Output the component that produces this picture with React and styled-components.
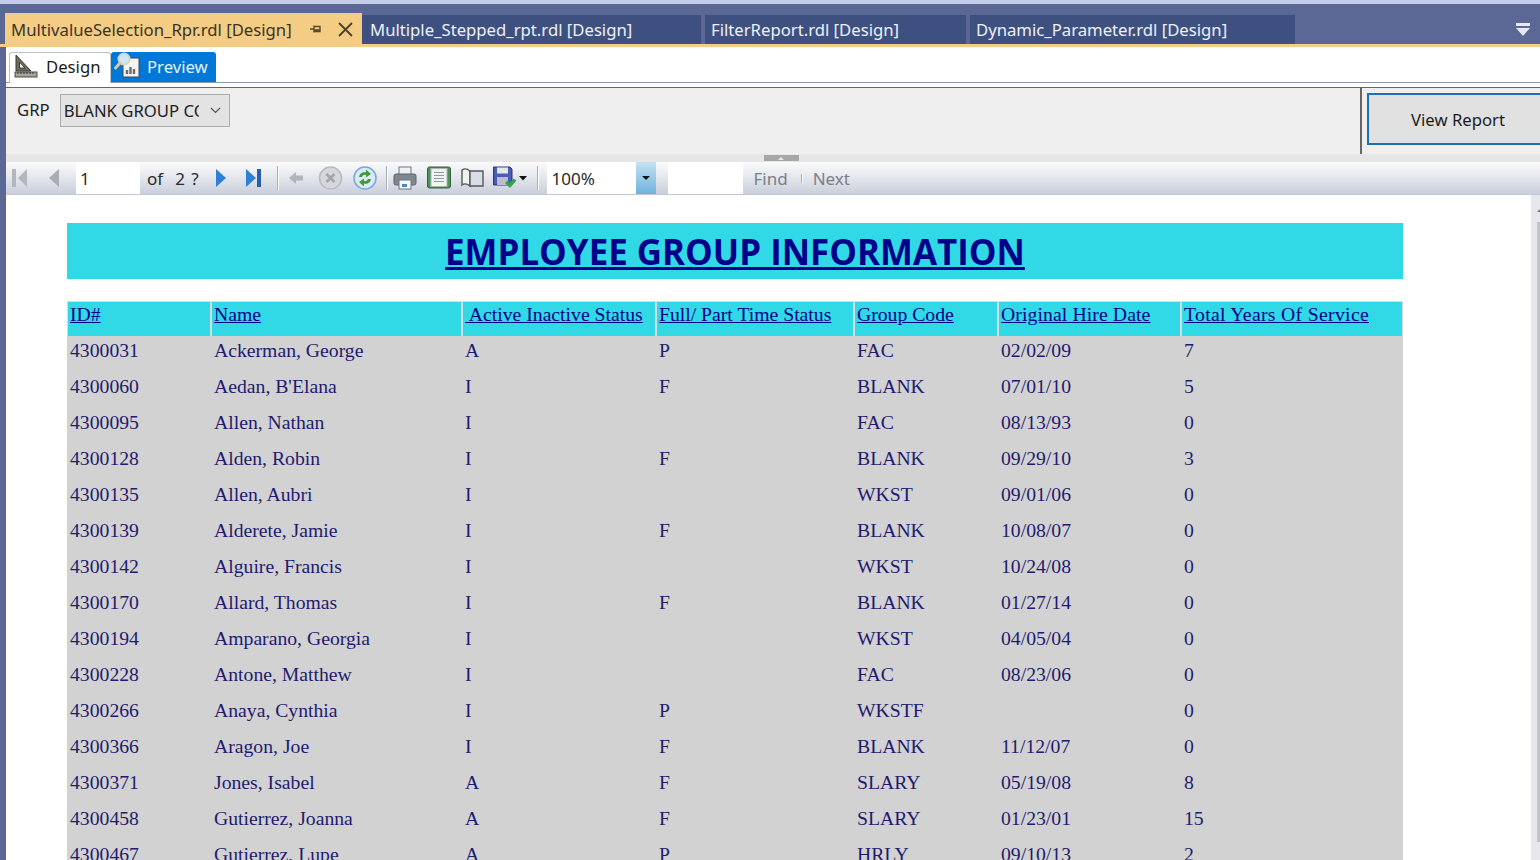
import React from "react";
import styled, { createGlobalStyle } from "styled-components";

const ui_font = `"Noto Sans", "Open Sans", sans-serif`;
const col_frame = "#5b6895";
const col_orange = "#f5cc84";
const col_cyan = "#31d9e6";
const col_row = "#d2d2d2";

const GlobalStyle = createGlobalStyle`
  html, body {
    margin: 0;
    height: 860px;
    overflow: hidden;
    background: #fff;
  }
`;

const Window = styled.div`
  width: 1540px;
  height: 860px;
  box-sizing: border-box;
  border-top: 4px solid #c5cdeb;
  background: ${col_frame};
  display: flex;
  flex-direction: column;
  overflow: hidden;
  font-family: ${ui_font};
`;

//#region Document tabs
const TabStrip = styled.div`
  height: 43px;
  flex: none;
  box-sizing: border-box;
  border-bottom: 3px solid ${col_orange};
  display: flex;
  align-items: flex-end;
  padding-left: 5px;
`;

const ActiveTab = styled.div`
  width: 357px;
  height: 34px;
  margin-bottom: -3px;
  box-sizing: border-box;
  padding: 0 0 2px 6px;
  background: ${col_orange};
  color: #3a3426;
  font-size: 16.7px;
  display: flex;
  align-items: center;
  white-space: nowrap;
`;

const TabName = styled.span`
  width: 299px;
  flex: none;
`;

const PinIcon = styled.svg`
  width: 12px;
  height: 12px;
  margin-right: 16px;
  flex: none;
`;

const CloseIcon = styled.svg`
  width: 15px;
  height: 15px;
  flex: none;
`;

const Tab = styled.div`
  width: ${(p) => p.$w}px;
  height: 29px;
  margin-right: ${(p) => p.$gap}px;
  box-sizing: border-box;
  padding-left: ${(p) => p.$pad}px;
  background: #3d5080;
  color: #eef0f6;
  font-size: 16.7px;
  line-height: 29px;
  white-space: nowrap;
  flex: none;
`;

const OverflowIcon = styled.svg`
  width: 14px;
  height: 13px;
  margin-left: 221px;
  margin-bottom: 8px;
  flex: none;
`;
//#endregion

const Content = styled.div`
  flex: 1;
  min-height: 0;
  margin-left: 6px;
  background: #fff;
  display: flex;
  flex-direction: column;
`;

//#region Design / Preview
const ViewTabs = styled.div`
  height: 36px;
  flex: none;
  box-sizing: border-box;
  padding: 5px 0 0 3px;
  border-bottom: 1px solid #8b9bb2;
  display: flex;
  align-items: stretch;
`;

const DesignTab = styled.div`
  width: 102px;
  box-sizing: border-box;
  margin-bottom: -1px;
  padding: 0 0 4px 4px;
  border: 1px solid #b9c1cc;
  border-bottom: 0;
  border-radius: 3px 3px 0 0;
  background: #fff;
  color: #1b1b1b;
  font-size: 16.7px;
  display: flex;
  align-items: center;
  gap: 8px;
`;

const PreviewTab = styled.div`
  width: 105px;
  box-sizing: border-box;
  padding: 0 0 2px 3px;
  border-radius: 3px 3px 0 0;
  background: #0078d7;
  color: #e6f2fb;
  font-size: 16.7px;
  display: flex;
  align-items: center;
  gap: 7px;
`;
//#endregion

//#region Parameters
const ParamBar = styled.div`
  height: 67px;
  flex: none;
  margin-top: 4px;
  box-sizing: border-box;
  border-top: 1px solid #666;
  background: #efefef;
  display: flex;
  justify-content: space-between;
  overflow: hidden;
`;

const ParamFields = styled.div`
  padding: 6px 0 0 11px;
  display: flex;
  align-items: flex-start;
  gap: 10px;
`;

const ParamLabel = styled.span`
  font-size: 16.7px;
  line-height: 33px;
  color: #222;
  margin-top: -1px;
`;

const ParamSelect = styled.div`
  width: 170px;
  height: 33px;
  box-sizing: border-box;
  border: 1px solid #adadad;
  background: #e3e3e3;
  padding-left: 3px;
  font-size: 16.7px;
  line-height: 31px;
  color: #222;
  display: flex;
  align-items: center;
  justify-content: space-between;
  white-space: nowrap;
`;

const SelectText = styled.span`
  width: 135px;
  overflow: hidden;
`;

const SelectCaret = styled.svg`
  width: 11px;
  height: 7px;
  margin-right: 8px;
  flex: none;
`;

const ParamAction = styled.div`
  width: 180px;
  flex: none;
  box-sizing: border-box;
  border-left: 2px solid #666;
  padding: 5px 0 0 5px;
`;

const ViewReport = styled.button`
  width: 182px;
  height: 52px;
  box-sizing: border-box;
  border: 2px solid #1e6fb4;
  background: #e1e1e1;
  color: #1c1c1c;
  font-family: ${ui_font};
  font-size: 16.7px;
  padding: 0;
  margin: 0;
`;

const Splitter = styled.div`
  height: 8px;
  flex: none;
  background: #e6e6e6;
  display: flex;
  justify-content: center;
`;

const SplitterGrip = styled.div`
  width: 35px;
  height: 6px;
  margin: 1px 0 0 16px;
  background: #a7a7a7;
  display: flex;
  justify-content: center;
  align-items: center;

  &::before {
    content: "";
    border-left: 3px solid transparent;
    border-right: 3px solid transparent;
    border-bottom: 3px solid #e8e8e8;
  }
`;
//#endregion

//#region Report toolbar
const Toolbar = styled.div`
  height: 33px;
  flex: none;
  box-sizing: border-box;
  border-bottom: 1px solid #c2c7d3;
  background: linear-gradient(180deg, #fbfbfc 0%, #e6e8ee 45%, #c9cedb 100%);
  display: flex;
  align-items: center;
  font-size: 17px;
  color: #2a2a2a;
`;

const ToolIcon = styled.svg`
  width: ${(p) => p.$w}px;
  height: 26px;
  margin-left: ${(p) => p.$ml}px;
  flex: none;
`;

const ToolInput = styled.div`
  width: ${(p) => p.$w}px;
  height: 32px;
  margin-left: ${(p) => p.$ml}px;
  box-sizing: border-box;
  padding-left: ${(p) => p.$pad || 0}px;
  background: #fff;
  line-height: 34px;
  flex: none;
`;

const ToolText = styled.span`
  margin-left: ${(p) => p.$ml}px;
  color: ${(p) => (p.$muted ? "#7b7f88" : "#2a2a2a")};
  word-spacing: ${(p) => p.$spread || 0}px;
  white-space: pre;
  flex: none;
`;

const ToolSep = styled.span`
  width: 1px;
  height: ${(p) => p.$h || 24}px;
  margin-left: ${(p) => p.$ml}px;
  background: #a9aeb9;
  box-shadow: 1px 0 0 #fff;
  flex: none;
`;

const ZoomButton = styled.div`
  width: 20px;
  height: 32px;
  background: linear-gradient(180deg, #c4e2f3 0%, #6fb2dc 100%);
  display: flex;
  align-items: center;
  justify-content: center;
  flex: none;

  &::before {
    content: "";
    border-left: 4px solid transparent;
    border-right: 4px solid transparent;
    border-top: 4px solid #111;
  }
`;
//#endregion

//#region Report
const ReportArea = styled.div`
  flex: 1;
  min-height: 0;
  display: flex;
  overflow: hidden;
`;

const ReportPage = styled.div`
  width: 1336px;
  flex: none;
  margin: 28px 0 0 61px;
`;

const Title = styled.div`
  height: 56px;
  background: ${col_cyan};
  color: #00008b;
  font-family: "Open Sans", sans-serif;
  font-weight: 700;
  font-size: 34.9px;
  line-height: 58px;
  text-align: center;
  text-decoration: underline;
`;

const Table = styled.table`
  width: 1336px;
  margin-top: 22px;
  table-layout: fixed;
  border-collapse: separate;
  border-spacing: 0;
  font-family: "Liberation Serif", serif;
`;

const HeadCell = styled.th`
  height: 35px;
  box-sizing: border-box;
  padding: 1px 0 0 2px;
  background: ${col_cyan};
  border: 1px solid #d6dcdc;
  border-bottom: 0;
  color: #00008b;
  font-size: 19.7px;
  letter-spacing: ${(p) => p.$track || 0}px;
  font-weight: 400;
  text-align: left;
  vertical-align: top;
  text-decoration: underline;
  white-space: pre;
`;

const Cell = styled.td`
  height: 36px;
  box-sizing: border-box;
  padding: 3px 0 0 3px;
  background: ${col_row};
  color: #1f1b6e;
  font-size: 19.7px;
  vertical-align: top;
  white-space: nowrap;
`;

const Scrollbar = styled.div`
  width: 9px;
  margin-left: auto;
  flex: none;
  background: #e8e8ec;
  display: flex;
  flex-direction: column;
  align-items: flex-end;

  &::before {
    content: "";
    margin-top: 14px;
    border-left: 3px solid transparent;
    border-bottom: 3px solid #777;
  }
`;

const ScrollThumb = styled.div`
  width: 3px;
  height: 620px;
  margin-top: 10px;
  background: #c2c3c9;
`;
//#endregion

const columns = [144, 251, 194, 198, 144, 183, 222];

const headers = [
  { label: "ID#" },
  { label: "Name" },
  { label: " Active Inactive Status" },
  { label: "Full/ Part Time Status" },
  { label: "Group Code" },
  { label: "Original Hire Date", track: 0.1 },
  { label: "Total Years Of Service", track: 0.32 },
];

const rows = [
  ["4300031", "Ackerman, George", "A", "P", "FAC", "02/02/09", "7"],
  ["4300060", "Aedan, B'Elana", "I", "F", "BLANK", "07/01/10", "5"],
  ["4300095", "Allen, Nathan", "I", "", "FAC", "08/13/93", "0"],
  ["4300128", "Alden, Robin", "I", "F", "BLANK", "09/29/10", "3"],
  ["4300135", "Allen, Aubri", "I", "", "WKST", "09/01/06", "0"],
  ["4300139", "Alderete, Jamie", "I", "F", "BLANK", "10/08/07", "0"],
  ["4300142", "Alguire, Francis", "I", "", "WKST", "10/24/08", "0"],
  ["4300170", "Allard, Thomas", "I", "F", "BLANK", "01/27/14", "0"],
  ["4300194", "Amparano, Georgia", "I", "", "WKST", "04/05/04", "0"],
  ["4300228", "Antone, Matthew", "I", "", "FAC", "08/23/06", "0"],
  ["4300266", "Anaya, Cynthia", "I", "P", "WKSTF", "", "0"],
  ["4300366", "Aragon, Joe", "I", "F", "BLANK", "11/12/07", "0"],
  ["4300371", "Jones, Isabel", "A", "F", "SLARY", "05/19/08", "8"],
  ["4300458", "Gutierrez, Joanna", "A", "F", "SLARY", "01/23/01", "15"],
  ["4300467", "Gutierrez, Lupe", "A", "P", "HRLY", "09/10/13", "2"],
];

const DesignGlyph = () => (
  <svg width="24" height="24" viewBox="0 0 24 24" style={{ flex: "none" }}>
    <path d="M2 1 L2 17 L17 17 Z M5.5 8 L5.5 14 L11 14 Z" fill="#6f6a60" fillRule="evenodd" stroke="#3c3a35" strokeWidth="1" />
    <rect x="1" y="18" width="22" height="5" fill="#a8a69c" stroke="#4a4a44" />
    <path d="M4 18v2M7 18v2M10 18v2M13 18v2M16 18v2M19 18v2" stroke="#333" />
  </svg>
);

const PreviewGlyph = () => (
  <svg width="26" height="26" viewBox="0 0 26 26" style={{ flex: "none", marginTop: -2 }}>
    <rect x="9" y="6" width="16" height="19" fill="#f4f4f4" stroke="#4b4b4b" />
    <path d="M13 22v-4M16.5 22v-7M20 22v-5" stroke="#6d6d6d" strokeWidth="2.4" />
    <circle cx="10" cy="7" r="5.5" fill="#cfe6f5" stroke="#d8d4cc" strokeWidth="2" />
    <path d="M6 11 L1.5 16" stroke="#d9c9a8" strokeWidth="3" strokeLinecap="round" />
  </svg>
);

const FirstIcon = () => (
  <ToolIcon $w={16} $ml={6} viewBox="0 0 16 26">
    <rect x="0" y="4" width="4" height="18" fill="#b3b7bd" />
    <path d="M15 4 L15 22 L6 13 Z" fill="#b3b7bd" />
  </ToolIcon>
);

const PrevIcon = () => (
  <ToolIcon $w={13} $ml={19} viewBox="0 0 13 26">
    <path d="M12 4 L12 22 L2 13 Z" fill="#a9adb3" />
  </ToolIcon>
);

const NextIcon = () => (
  <ToolIcon $w={14} $ml={15} viewBox="0 0 14 26">
    <path d="M2 4 L2 22 L12 13 Z" fill="#2f7fd6" />
  </ToolIcon>
);

const LastIcon = () => (
  <ToolIcon $w={16} $ml={18} viewBox="0 0 16 26">
    <path d="M0 4 L0 22 L10 13 Z" fill="#2f7fd6" />
    <rect x="11" y="4" width="4" height="18" fill="#2a5fae" />
  </ToolIcon>
);

const BackIcon = () => (
  <ToolIcon $w={16} $ml={10} viewBox="0 0 16 26">
    <path d="M1 13 L8 7 L8 10.5 L15 10.5 L15 15.5 L8 15.5 L8 19 Z" fill="#b1b4b9" />
  </ToolIcon>
);

const StopIcon = () => (
  <ToolIcon $w={25} $ml={14} viewBox="0 0 25 26">
    <circle cx="12.5" cy="13" r="11" fill="#d5d7dc" stroke="#b9bbc0" strokeWidth="1.5" />
    <path d="M8.5 9 L16.5 17 M16.5 9 L8.5 17" stroke="#a3a5aa" strokeWidth="2.6" />
  </ToolIcon>
);

const RefreshIcon = () => (
  <ToolIcon $w={24} $ml={10} viewBox="0 0 24 26">
    <circle cx="12" cy="13" r="11" fill="#dceaf8" stroke="#7ba6d8" strokeWidth="1.5" />
    <path d="M6 12 C6.5 8 10 6.5 13 7.5 L13 4.5 L18 9 L13 12.5 L13 10 C11 9.5 9.5 10.5 9 12 Z" fill="#3f9a38" />
    <path d="M18 14 C17.5 18 14 19.5 11 18.5 L11 21.5 L6 17 L11 13.5 L11 16 C13 16.5 14.5 15.5 15 14 Z" fill="#3f9a38" />
  </ToolIcon>
);

const PrintIcon = () => (
  <ToolIcon $w={24} $ml={6} viewBox="0 0 24 26">
    <rect x="6" y="2" width="12" height="8" fill="#eef0f2" stroke="#6d7680" />
    <rect x="1" y="9" width="22" height="11" rx="2" fill="#7f8890" stroke="#5c646c" />
    <rect x="6" y="15" width="12" height="9" fill="#f5f7f8" stroke="#6d7680" />
    <rect x="9" y="19" width="5" height="3" fill="#4a86c0" />
  </ToolIcon>
);

const LayoutIcon = () => (
  <ToolIcon $w={24} $ml={10} viewBox="0 0 24 26">
    <rect x="0.5" y="2" width="23" height="21" rx="2" fill="#4f8f5f" stroke="#34603f" />
    <rect x="4" y="3.5" width="16" height="18" fill="#f1f4f2" stroke="#a9b6ad" />
    <path d="M7 7.5h10M7 10.5h10M7 13.5h10M7 16.5h10" stroke="#8b9aa8" strokeWidth="1.2" />
  </ToolIcon>
);

const BookIcon = () => (
  <ToolIcon $w={23} $ml={10} viewBox="0 0 23 26">
    <path d="M9 6 C6 3.5 3 3.5 1 5 L1 20 C3 18.5 6 18.5 9 21 Z" fill="#f2f2f0" stroke="#55585c" strokeWidth="1.4" />
    <path d="M9 6 L22 6 L22 21 L9 21 Z" fill="#d9dde6" stroke="#55585c" strokeWidth="1.4" />
  </ToolIcon>
);

const SaveIcon = () => (
  <ToolIcon $w={24} $ml={9} viewBox="0 0 24 26">
    <path d="M0.5 2 L17 2 L19 4 L19 20 L0.5 20 Z" fill="#4a5cb4" stroke="#2f3576" />
    <rect x="4" y="2.5" width="11" height="6" fill="#e4e6ef" />
    <rect x="4" y="12" width="11" height="8" fill="#b9bdd2" />
    <path d="M12 18 L17 23 L23.5 15.5 L20.5 13.5 L17 18 L14.5 15.5 Z" fill="#37a44a" />
  </ToolIcon>
);

const DropCaret = () => (
  <ToolIcon $w={8} $ml={2} viewBox="0 0 8 26">
    <path d="M0 11 L8 11 L4 15.5 Z" fill="#111" />
  </ToolIcon>
);

const App = () => {
  return (
    <Window>
      <GlobalStyle />
      <TabStrip>
        <ActiveTab>
          <TabName>MultivalueSelection_Rpr.rdl [Design]</TabName>
          <PinIcon viewBox="0 0 12 12">
            <path d="M0 6h4M4 2.5v7M4 3.5h6v5H4M4 7h6" fill="none" stroke="#5a4a22" strokeWidth="1.4" />
          </PinIcon>
          <CloseIcon viewBox="0 0 15 15">
            <path d="M1 1 L14 14 M14 1 L1 14" stroke="#4b4028" strokeWidth="1.8" />
          </CloseIcon>
        </ActiveTab>
        <Tab $w={339} $gap={4} $pad={8}>Multiple_Stepped_rpt.rdl [Design]</Tab>
        <Tab $w={261} $gap={4} $pad={6}>FilterReport.rdl [Design]</Tab>
        <Tab $w={325} $gap={0} $pad={6}>Dynamic_Parameter.rdl [Design]</Tab>
        <OverflowIcon viewBox="0 0 14 13">
          <rect x="0" y="0" width="14" height="3" fill="#e6e9f7" />
          <path d="M0 5 L14 5 L7 13 Z" fill="#e6e9f7" />
        </OverflowIcon>
      </TabStrip>
      <Content>
        <ViewTabs>
          <DesignTab>
            <DesignGlyph />
            Design
          </DesignTab>
          <PreviewTab>
            <PreviewGlyph />
            Preview
          </PreviewTab>
        </ViewTabs>
        <ParamBar>
          <ParamFields>
            <ParamLabel>GRP</ParamLabel>
            <ParamSelect>
              <SelectText>BLANK GROUP CODE</SelectText>
              <SelectCaret viewBox="0 0 11 7">
                <path d="M1 1 L5.5 5.5 L10 1" fill="none" stroke="#555" strokeWidth="1.2" />
              </SelectCaret>
            </ParamSelect>
          </ParamFields>
          <ParamAction>
            <ViewReport>View Report</ViewReport>
          </ParamAction>
        </ParamBar>
        <Splitter>
          <SplitterGrip />
        </Splitter>
        <Toolbar>
          <FirstIcon />
          <PrevIcon />
          <ToolInput $w={64} $ml={16} $pad={4}>1</ToolInput>
          <ToolText $ml={7} $spread={1.67}>of  2 ?</ToolText>
          <NextIcon />
          <LastIcon />
          <ToolSep $ml={15} />
          <BackIcon />
          <StopIcon />
          <RefreshIcon />
          <ToolSep $ml={9} />
          <PrintIcon />
          <LayoutIcon />
          <BookIcon />
          <SaveIcon />
          <DropCaret />
          <ToolSep $ml={10} />
          <ToolInput $w={89} $ml={9} $pad={5}>100%</ToolInput>
          <ZoomButton />
          <ToolInput $w={75} $ml={12} />
          <ToolText $ml={11} $muted>Find</ToolText>
          <ToolSep $ml={13} $h={9} />
          <ToolText $ml={11} $muted>Next</ToolText>
        </Toolbar>
        <ReportArea>
          <ReportPage>
            <Title>EMPLOYEE GROUP INFORMATION</Title>
            <Table>
              <colgroup>
                {columns.map((w, i) => (
                  <col key={i} style={{ width: w }} />
                ))}
              </colgroup>
              <thead>
                <tr>
                  {headers.map((h) => (
                    <HeadCell key={h.label} $track={h.track}>{h.label}</HeadCell>
                  ))}
                </tr>
              </thead>
              <tbody>
                {rows.map((row) => (
                  <tr key={row[0]}>
                    {row.map((value, i) => (
                      <Cell key={i}>{value}</Cell>
                    ))}
                  </tr>
                ))}
              </tbody>
            </Table>
          </ReportPage>
          <Scrollbar>
            <ScrollThumb />
          </Scrollbar>
        </ReportArea>
      </Content>
    </Window>
  );
};

export default App;
